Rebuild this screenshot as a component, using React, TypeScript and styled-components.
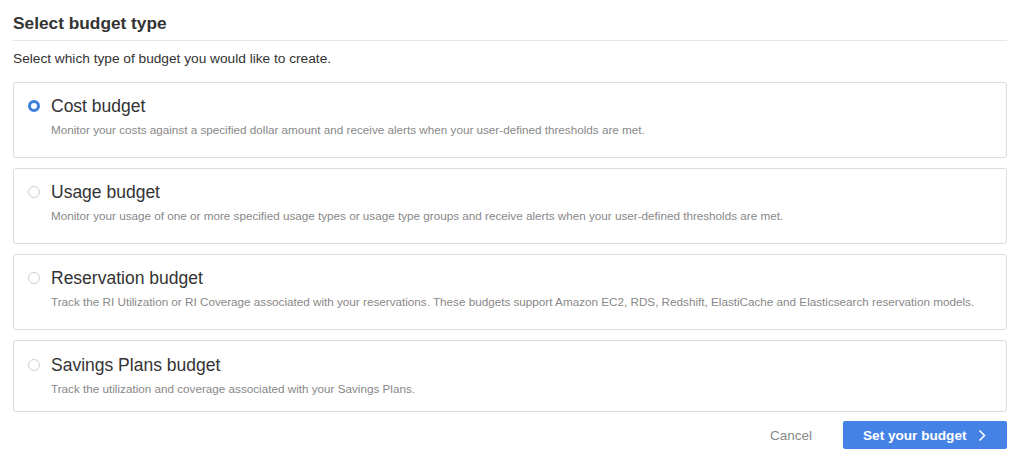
import React, { FC, useState } from 'react';
import styled, { createGlobalStyle, css } from 'styled-components';

const GlobalStyle = createGlobalStyle`
  html, body {
    margin: 0;
    padding: 0;
    background: #fff;
    font-family: "Liberation Sans", Arial, Helvetica, sans-serif;
    color: #333;
  }
`;

const Page = styled.div`
  padding: 13px 17px 0 13px;
`;

const Heading = styled.h2`
  margin: 0;
  font-size: 17.3px;
  line-height: 20px;
  font-weight: bold;
  color: #333;
  padding-bottom: 7px;
  border-bottom: 1px solid #e6e6e6;
`;

const Intro = styled.p`
  margin: 10px 0 15px;
  font-size: 13.7px;
  line-height: 16px;
  color: #333;
`;

const OptionList = styled.div`
  display: flex;
  flex-direction: column;
  gap: 10px;
`;

const Card = styled.label<{ $last?: boolean }>`
  display: flex;
  align-items: flex-start;
  gap: 11px;
  padding: ${({ $last }) => ($last ? '14px 14px 15px' : '13px 14px 20px')};
  border: 1px solid #dcdcdc;
  border-radius: 3px;
  cursor: pointer;
`;

const Radio = styled.span<{ $checked: boolean }>`
  flex: none;
  box-sizing: border-box;
  width: 12px;
  height: 12px;
  margin-top: 4px;
  border-radius: 50%;
  ${({ $checked }) =>
    $checked
      ? css`
          border: 3.5px solid #3b7ddd;
        `
      : css`
          border: 1px solid #cfcfcf;
        `}
`;

const Body = styled.div`
  display: flex;
  flex-direction: column;
  gap: 7px;
`;

const Name = styled.span`
  font-size: 17.5px;
  line-height: 20px;
  color: #333;
`;

const Description = styled.span`
  font-size: 11.7px;
  line-height: 14px;
  color: #888;
`;

const Footer = styled.div`
  display: flex;
  justify-content: flex-end;
  align-items: center;
  gap: 31px;
  margin-top: 9px;
`;

const CancelButton = styled.button`
  border: none;
  background: none;
  padding: 0;
  font-family: inherit;
  font-size: 13.5px;
  color: #888;
  cursor: pointer;
`;

const PrimaryButton = styled.button`
  display: flex;
  align-items: center;
  gap: 12px;
  height: 28px;
  width: 164px;
  padding: 0 0 0 20px;
  border: none;
  border-radius: 2px;
  background: #4482e6;
  color: #fff;
  font-family: inherit;
  font-size: 13.6px;
  font-weight: bold;
  white-space: nowrap;
  cursor: pointer;
`;

const Chevron: FC = () => (
  <svg width="8" height="13" viewBox="0 0 8 13" fill="none">
    <path d="M1.5 1.5 L6.5 6.5 L1.5 11.5" stroke="#fff" strokeWidth="1.5" />
  </svg>
);

const options = [
  {
    id: 'cost',
    name: 'Cost budget',
    description:
      'Monitor your costs against a specified dollar amount and receive alerts when your user-defined thresholds are met.',
  },
  {
    id: 'usage',
    name: 'Usage budget',
    description:
      'Monitor your usage of one or more specified usage types or usage type groups and receive alerts when your user-defined thresholds are met.',
  },
  {
    id: 'reservation',
    name: 'Reservation budget',
    description:
      'Track the RI Utilization or RI Coverage associated with your reservations. These budgets support Amazon EC2, RDS, Redshift, ElastiCache and Elasticsearch reservation models.',
  },
  {
    id: 'savings',
    name: 'Savings Plans budget',
    description:
      'Track the utilization and coverage associated with your Savings Plans.',
  },
];

const App: FC = () => {
  const [selected, setSelected] = useState('cost');

  return (
    <Page>
      <GlobalStyle />
      <Heading>Select budget type</Heading>
      <Intro>Select which type of budget you would like to create.</Intro>

      <OptionList>
        {options.map((option, i) => (
          <Card
            key={option.id}
            $last={i === options.length - 1}
            onClick={() => setSelected(option.id)}
          >
            <Radio $checked={selected === option.id} />
            <Body>
              <Name>{option.name}</Name>
              <Description>{option.description}</Description>
            </Body>
          </Card>
        ))}
      </OptionList>

      <Footer>
        <CancelButton>Cancel</CancelButton>
        <PrimaryButton>
          Set your budget
          <Chevron />
        </PrimaryButton>
      </Footer>
    </Page>
  );
};

export default App;
